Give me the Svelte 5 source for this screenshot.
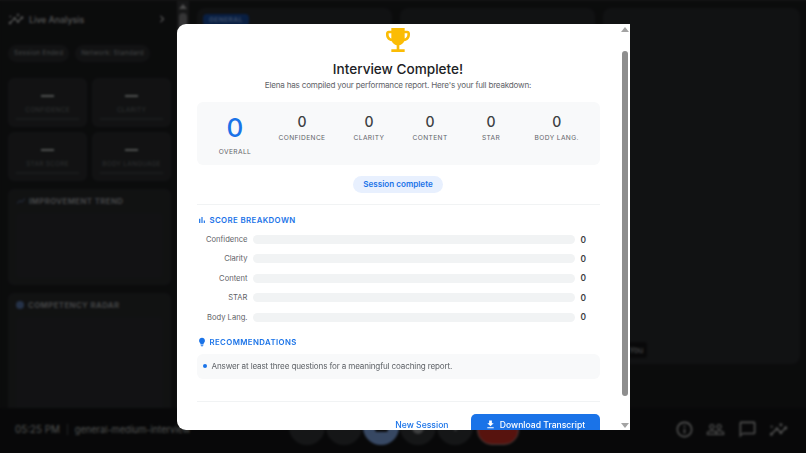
<script>
  const icons = {
    insights: "M21 8c-1.45 0-2.26 1.44-1.93 2.51l-3.55 3.56c-.3-.09-.74-.09-1.04 0l-2.55-2.55C12.27 10.45 11.46 9 10 9c-1.45 0-2.27 1.44-1.93 2.52l-4.56 4.55C2.44 15.74 1 16.55 1 18c0 1.1.9 2 2 2 1.45 0 2.26-1.44 1.93-2.51l4.55-4.56c.3.09.74.09 1.04 0l2.55 2.55C12.73 16.55 13.54 18 15 18c1.45 0 2.27-1.44 1.93-2.52l3.56-3.55C21.56 12.26 23 11.45 23 10c0-1.1-.9-2-2-2zM15 9l.94-2.07L18 6l-2.06-.93L15 3l-.92 2.07L12 6l2.08.93zM3.5 11L4 9l2-.5L4 8l-.5-2L3 8l-2 .5L3 9z",
    info: "M11 7h2v2h-2zm0 4h2v6h-2zm1-9C6.48 2 2 6.48 2 12s4.48 10 10 10 10-4.48 10-10S17.52 2 12 2zm0 18c-4.41 0-8-3.59-8-8s3.59-8 8-8 8 3.59 8 8-3.59 8-8 8z",
    people: "M16.5 13c-1.2 0-3.07.34-4.5 1-1.43-.67-3.3-1-4.5-1C5.33 13 1 14.08 1 16.25V19h22v-2.75c0-2.17-4.33-3.25-6.5-3.25zm-4 4.5h-10v-1.25c0-.54 2.56-1.75 5-1.75s5 1.21 5 1.75v1.25zm9 0H14v-1.25c0-.46-.2-.86-.52-1.22.88-.3 1.96-.53 3.02-.53 2.44 0 5 1.21 5 1.75v1.25zM7.5 12c1.93 0 3.5-1.57 3.5-3.5S9.43 5 7.5 5 4 6.57 4 8.5 5.57 12 7.5 12zm0-5.5c1.1 0 2 .9 2 2s-.9 2-2 2-2-.9-2-2 .9-2 2-2zm9 5.5c1.93 0 3.5-1.57 3.5-3.5S18.43 5 16.5 5 13 6.57 13 8.5s1.57 3.5 3.5 3.5zm0-5.5c1.1 0 2 .9 2 2s-.9 2-2 2-2-.9-2-2 .9-2 2-2z",
    chat: "M20 2H4c-1.1 0-2 .9-2 2v18l4-4h14c1.1 0 2-.9 2-2V4c0-1.1-.9-2-2-2zm0 14H6l-2 2V4h16v12z",
    trophy: "M19 5h-2V3H7v2H5c-1.1 0-2 .9-2 2v1c0 2.55 1.92 4.63 4.39 4.94.63 1.5 1.98 2.63 3.61 2.96V19H7v2h10v-2h-4v-3.1c1.63-.33 2.98-1.46 3.61-2.96C19.08 12.63 21 10.55 21 8V7c0-1.1-.9-2-2-2zM5 8V7h2v3.82C5.84 10.4 5 9.3 5 8zm14 0c0 1.3-.84 2.4-2 2.82V7h2v1z",
    bars: "M5 9.2h3V19H5zM10.6 5h2.8v14h-2.8zm5.6 8H19v6h-2.8z",
    bulb: "M9 21c0 .55.45 1 1 1h4c.55 0 1-.45 1-1v-1H9v1zm3-19C8.14 2 5 5.14 5 9c0 2.38 1.19 4.47 3 5.74V17c0 .55.45 1 1 1h6c.55 0 1-.45 1-1v-2.26c1.81-1.27 3-3.36 3-5.74 0-3.86-3.14-7-7-7z",
    download: "M19 9h-4V3H9v6H5l7 7 7-7zM5 18v2h14v-2H5z",
    chevron: "M10 6L8.59 7.41 13.17 12l-4.58 4.59L10 18l6-6z",
    chart: "M3.5 18.49l6-6.01 4 4L22 6.92l-1.41-1.41-7.09 7.97-4-4L2 16.99z"
  };

  const metrics = ["Confidence", "Clarity", "Star Score", "Body Language"];
  const stats = ["Confidence", "Clarity", "Content", "STAR", "Body Lang."];
  const scores = ["Confidence", "Clarity", "Content", "STAR", "Body Lang."];
  const rightIcons = ["info", "people", "chat", "insights"];
</script>

<div class="page">
  <div class="top">
    <aside class="sidebar">
      <div class="side-inner">
        <div class="side-head">
          <svg class="ic-16" viewBox="0 0 24 24"><path d={icons.insights} /></svg>
          <span class="side-title">Live Analysis</span>
          <svg class="ic-14 chevron" viewBox="0 0 24 24"><path d={icons.chevron} /></svg>
        </div>
        <div class="chips">
          <span class="chip">Session Ended</span>
          <span class="chip">Network: Standard</span>
        </div>
        <div class="metrics">
          {#each metrics as m}
            <div class="metric">
              <div class="dash"></div>
              <div class="metric-label">{m}</div>
              <div class="metric-bar"></div>
            </div>
          {/each}
        </div>
        <section class="panel trend">
          <h4><svg class="ic-10 blue-dim" viewBox="0 0 24 24"><path d={icons.chart} /></svg>Improvement Trend</h4>
          <div class="panel-box"></div>
        </section>
        <section class="panel radar">
          <h4><span class="radar-dot"></span>Competency Radar</h4>
          <div class="panel-box"></div>
        </section>
      </div>
      <div class="side-scroll">
        <span class="arrow-up dark"></span>
        <span class="side-thumb"></span>
      </div>
    </aside>
    <main class="tiles">
      <div class="tile"><span class="tag">GENERAL</span></div>
      <div class="tile"></div>
      <div class="tile you-tile"><span class="you">You</span></div>
    </main>
  </div>
  <footer class="bottom">
    <div class="meeting">
      <span>05:25 PM</span>
      <span class="sep"></span>
      <span class="room">general-medium-interview</span>
    </div>
    <div class="controls">
      <span class="round"></span>
      <span class="round"></span>
      <span class="round on"><span class="cam"></span></span>
      <span class="round"><span class="blob"></span></span>
      <span class="round"><span class="dot"></span></span>
      <span class="hangup"></span>
    </div>
    <div class="right-icons">
      {#each rightIcons as name}
        <svg class="ic-20" viewBox="0 0 24 24"><path d={icons[name]} /></svg>
      {/each}
    </div>
  </footer>

  <div class="overlay">
    <div class="modal">
      <div class="modal-body">
        <svg class="trophy" viewBox="0 0 24 24"><path d={icons.trophy} /></svg>
        <h2>Interview Complete!</h2>
        <p class="sub">Elena has compiled your performance report. Here's your full breakdown:</p>

        <div class="stats">
          <div class="stat overall">
            <div class="big">0</div>
            <div class="stat-label">Overall</div>
          </div>
          {#each stats as s}
            <div class="stat">
              <div class="num">0</div>
              <div class="stat-label">{s}</div>
            </div>
          {/each}
        </div>

        <div class="pill-row"><span class="pill">Session complete</span></div>
        <hr />

        <h3><svg class="ic-10" viewBox="0 0 24 24"><path d={icons.bars} /></svg>Score Breakdown</h3>
        <div class="rows">
          {#each scores as s}
            <div class="row">
              <span class="row-label">{s}</span>
              <span class="row-bar"></span>
              <span class="row-val">0</span>
            </div>
          {/each}
        </div>

        <h3 class="rec-title"><svg class="ic-10" viewBox="0 0 24 24"><path d={icons.bulb} /></svg>Recommendations</h3>
        <div class="rec">
          <span class="bullet"></span>
          <span>Answer at least three questions for a meaningful coaching report.</span>
        </div>
        <hr class="last" />

        <div class="actions">
          <button class="ghost">New Session</button>
          <button class="primary">
            <svg class="ic-11" viewBox="0 0 24 24"><path d={icons.download} /></svg>
            Download Transcript
          </button>
        </div>
      </div>
      <div class="modal-scroll">
        <span class="arrow-up"></span>
        <span class="modal-thumb"></span>
        <span class="arrow-down"></span>
      </div>
    </div>
  </div>
</div>

<style>
  :global(body) {
    margin: 0;
    background: #1d1e20;
    font-family: "Inter", "Liberation Sans", sans-serif;
  }

  svg {
    fill: currentColor;
    display: block;
    flex: none;
  }

  .ic-10 { width: 10px; height: 10px; }
  .ic-11 { width: 11px; height: 11px; }
  .ic-14 { width: 14px; height: 14px; }
  .ic-16 { width: 16px; height: 16px; }
  .ic-20 { width: 19px; height: 19px; }

  .page {
    position: relative;
    width: 806px;
    height: 453px;
    overflow: hidden;
    display: flex;
    flex-direction: column;
    background: #1d1e20;
    color: #e8eaed;
  }

  .top {
    flex: 1;
    min-height: 0;
    display: flex;
    border-top: 1px solid #333;
  }

  /* left panel */
  .sidebar {
    width: 189px;
    flex: none;
    display: flex;
    overflow: hidden;
  }

  .side-inner {
    width: 177px;
    flex: none;
    padding: 0 6px 0 8px;
    box-sizing: border-box;
  }

  .side-head {
    height: 36px;
    display: flex;
    align-items: center;
    gap: 5px;
    color: #d4d7d5;
  }

  .side-title {
    font-size: 8.8px;
    font-weight: 500;
    flex: 1;
  }

  .chevron {
    margin-right: 2px;
  }

  .chips {
    margin-top: 8px;
    display: flex;
    gap: 6px;
  }

  .chip {
    height: 17px;
    line-height: 17px;
    padding: 0 6px;
    border-radius: 9px;
    background: #2d2f31;
    color: #96999c;
    font-size: 6.6px;
    font-weight: 500;
    letter-spacing: 0.2px;
    white-space: nowrap;
  }

  .metrics {
    margin-top: 16px;
    display: grid;
    grid-template-columns: 79px 79px;
    column-gap: 5px;
    row-gap: 5px;
  }

  .metric {
    height: 49px;
    box-sizing: border-box;
    background: #2d2f31;
    border-radius: 6px;
    padding: 0 8px;
    display: flex;
    flex-direction: column;
    align-items: center;
  }

  .dash {
    width: 13px;
    height: 2px;
    margin-top: 17px;
    background: #c4c7c5;
  }

  .metric-label {
    margin-top: 9px;
    font-size: 6.4px;
    line-height: 8px;
    letter-spacing: 0.3px;
    text-transform: uppercase;
    color: #75787b;
    white-space: nowrap;
  }

  .metric-bar {
    width: 100%;
    height: 2px;
    margin-top: 4px;
    background: #404245;
  }

  .panel {
    width: 163px;
    margin-top: 8px;
    box-sizing: border-box;
    border-radius: 6px;
    background: #2b2d2f;
    padding: 7px 8px;
  }

  h4 {
    margin: 0;
    display: flex;
    align-items: center;
    gap: 3px;
    height: 10px;
    font-size: 7.8px;
    font-weight: 700;
    letter-spacing: 0.4px;
    text-transform: uppercase;
    color: #a6a9ac;
    white-space: nowrap;
  }

  .blue-dim {
    color: #5d7196;
  }

  .radar-dot {
    width: 8px;
    height: 8px;
    margin-right: 1px;
    border-radius: 50%;
    background: #5d7eb5;
  }

  .panel-box {
    margin-top: 7px;
    background: #2d2f32;
    border-radius: 4px;
  }

  .trend {
    height: 96px;
  }

  .trend .panel-box {
    height: 65px;
  }

  .radar {
    height: 130px;
  }

  .radar .panel-box {
    height: 110px;
  }

  .side-scroll {
    width: 12px;
    background: #3a3b3d;
    display: flex;
    flex-direction: column;
    align-items: center;
    padding-top: 3px;
    box-sizing: border-box;
  }

  .arrow-up, .arrow-down {
    width: 0;
    height: 0;
    border-left: 4px solid transparent;
    border-right: 4px solid transparent;
  }

  .arrow-up {
    border-bottom: 5px solid #a3a3a3;
  }

  .arrow-up.dark {
    border-bottom-color: #c0c0c0;
  }

  .arrow-down {
    border-top: 5px solid #a3a3a3;
  }

  .side-thumb {
    margin-top: 4px;
    width: 8px;
    height: 120px;
    border-radius: 4px;
    background: #858688;
  }

  /* video tiles */
  .tiles {
    flex: 1;
    display: grid;
    grid-template-columns: 195px 195px 197px;
    column-gap: 8px;
    padding: 7px 6px 44px 8px;
  }

  .tile {
    position: relative;
    background: #2b2d30;
    border-radius: 8px;
  }

  .tag {
    position: absolute;
    left: 6px;
    top: 6px;
    padding: 2px 6px;
    border-radius: 4px;
    background: #174ea6;
    color: #8ab4f8;
    font-size: 6.6px;
    font-weight: 700;
    letter-spacing: 0.4px;
  }

  .you {
    position: absolute;
    left: 22px;
    bottom: 6px;
    padding: 2px 4px;
    height: 12px;
    line-height: 12px;
    border-radius: 3px;
    background: #17181a;
    color: #c9cbcd;
    font-size: 8px;
  }

  /* bottom bar */
  .bottom {
    height: 45px;
    flex: none;
    position: relative;
    display: flex;
    align-items: center;
    padding: 0 18px 3px 15px;
    box-sizing: border-box;
    background: #151618;
  }

  .meeting {
    display: flex;
    align-items: center;
    gap: 7px;
    font-size: 9.8px;
    color: #c4c7c5;
    white-space: nowrap;
  }

  .room {
    font-size: 9.2px;
  }

  .sep {
    width: 1px;
    height: 11px;
    background: #55575a;
  }

  .controls {
    position: absolute;
    left: 289px;
    bottom: 8px;
    display: flex;
    align-items: flex-end;
    gap: 1px;
  }

  .round {
    width: 36px;
    height: 36px;
    border-radius: 50%;
    background: #36383b;
    display: flex;
    align-items: center;
    justify-content: center;
  }

  .round.on {
    background: #8ab4f8;
  }

  .cam {
    width: 13px;
    height: 10px;
    border-radius: 2px;
    background: #202124;
  }

  .blob {
    width: 12px;
    height: 14px;
    border-radius: 50%;
    background: #9a9c9e;
  }

  .dot {
    width: 3px;
    height: 3px;
    margin-top: 5px;
    border-radius: 50%;
    background: #9a9c9e;
  }

  .hangup {
    width: 42px;
    height: 30px;
    box-sizing: border-box;
    border-radius: 15px;
    border: 1px solid #b3a19e;
    background: #d93025;
    margin-left: 3px;
  }

  .right-icons {
    margin-left: auto;
    display: flex;
    gap: 12.5px;
    color: #c4c4c4;
  }

  /* dim layer + dialog */
  .overlay {
    position: absolute;
    inset: 0;
    display: flex;
    align-items: center;
    justify-content: center;
    background: rgba(0, 0, 0, 0.6);
    backdrop-filter: blur(1px);
    padding-top: 1px;
    box-sizing: border-box;
  }

  .modal {
    width: 453px;
    height: 406px;
    display: flex;
    background: #fff;
    border-radius: 9px 0 0 9px;
    overflow: hidden;
    color: #3c4043;
  }

  .modal-body {
    flex: 1;
    min-width: 0;
    padding: 0 20px;
    display: flex;
    flex-direction: column;
    overflow: hidden;
  }

  .modal-scroll {
    width: 10px;
    flex: none;
    display: flex;
    flex-direction: column;
    align-items: center;
    padding: 3px 0 2px;
    box-sizing: border-box;
  }

  .modal-thumb {
    width: 6px;
    margin-top: 19px;
    height: 345px;
    border-radius: 3px;
    background: #8e8e8e;
  }

  .arrow-down {
    margin-top: auto;
  }

  .trophy {
    width: 32px;
    height: 32px;
    color: #fbbc04;
    align-self: center;
    flex: none;
  }

  h2 {
    margin: 4px 0 0;
    font-size: 13.6px;
    line-height: 18px;
    font-weight: 500;
    text-align: center;
    color: #202124;
  }

  .sub {
    margin: 1px 0 0;
    font-size: 8.1px;
    letter-spacing: -0.2px;
    line-height: 12px;
    text-align: center;
    color: #5f6368;
  }

  .stats {
    margin-top: 11px;
    height: 63px;
    flex: none;
    box-sizing: border-box;
    background: #f8f9fa;
    border-radius: 6px;
    padding: 11px 0 0 22px;
    display: flex;
    align-items: flex-start;
    gap: 27px;
  }

  .stat {
    min-width: 33px;
    display: flex;
    flex-direction: column;
    align-items: center;
  }

  .big {
    font-size: 26px;
    line-height: 30px;
    font-weight: 500;
    color: #1a73e8;
  }

  .num {
    font-size: 14px;
    line-height: 17px;
    font-weight: 500;
    color: #3c4043;
  }

  .stat-label {
    margin-top: 3px;
    font-size: 6.6px;
    line-height: 10px;
    letter-spacing: 0.4px;
    text-transform: uppercase;
    color: #5f6368;
    white-space: nowrap;
  }

  .overall .stat-label {
    margin-top: 4px;
  }

  .pill-row {
    margin-top: 11px;
    display: flex;
    justify-content: center;
  }

  .pill {
    height: 17px;
    line-height: 17px;
    padding: 0 10px;
    border-radius: 9px;
    background: #e8f0fe;
    color: #1a73e8;
    font-size: 8.1px;
    font-weight: 600;
  }

  hr {
    width: 100%;
    margin: 11px 0 0;
    border: 0;
    border-top: 1px solid #f1f3f4;
    flex: none;
  }

  h3 {
    margin: 10px 0 0;
    height: 12px;
    display: flex;
    align-items: center;
    gap: 3px;
    font-size: 7.8px;
    font-weight: 600;
    letter-spacing: 0.4px;
    text-transform: uppercase;
    color: #1a73e8;
  }

  .rows {
    margin-top: 10px;
    display: flex;
    flex-direction: column;
    gap: 10.4px;
  }

  .row {
    height: 9px;
    display: flex;
    align-items: center;
    gap: 6px;
  }

  .row-label {
    width: 50px;
    padding-left: 1px;
    text-align: right;
    font-size: 7.6px;
    color: #5f6368;
    white-space: nowrap;
  }

  .row-bar {
    flex: 1;
    height: 9px;
    border-radius: 5px;
    background: #f1f3f4;
    margin-left: -1px;
  }

  .row-val {
    width: 19px;
    text-align: left;
    font-size: 8.4px;
    font-weight: 600;
    color: #3c4043;
  }

  .rec-title {
    margin-top: 15px;
  }

  .rec {
    margin-top: 7px;
    height: 25px;
    flex: none;
    box-sizing: border-box;
    padding-left: 6px;
    display: flex;
    align-items: center;
    gap: 5px;
    background: #f8f9fa;
    border-radius: 6px;
    font-size: 8.1px;
    letter-spacing: -0.15px;
    color: #5f6368;
  }

  .bullet {
    width: 4px;
    height: 4px;
    border-radius: 50%;
    background: #1a73e8;
  }

  hr.last {
    margin-top: 22px;
  }

  .actions {
    margin-top: 12px;
    display: flex;
    justify-content: flex-end;
    align-items: center;
    gap: 22px;
    flex: none;
  }

  button {
    border: 0;
    font-family: inherit;
    font-size: 8.6px;
    font-weight: 500;
  }

  .ghost {
    background: none;
    padding: 0;
    color: #1a73e8;
  }

  .primary {
    width: 129px;
    height: 22px;
    padding: 0;
    border-radius: 5px;
    background: #1a73e8;
    color: #fff;
    display: flex;
    align-items: center;
    justify-content: center;
    gap: 4px;
  }
</style>
